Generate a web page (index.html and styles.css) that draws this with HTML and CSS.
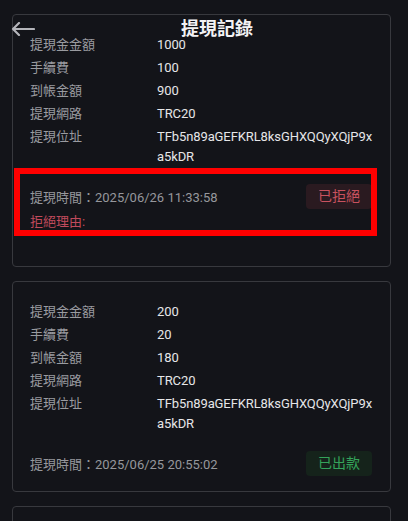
FILE: index.html
```html
<!DOCTYPE html>
<html lang="zh-Hant">
<head>
<meta charset="utf-8">
<link rel="stylesheet" href="styles.css">
</head>
<body>
<header class="topbar">
  <svg class="back" width="24" height="14" viewBox="0 0 24 14"><path d="M23 7H2M8 1L2 7l6 6" fill="none" stroke="#b4b5ba" stroke-width="2.2" stroke-linecap="round" stroke-linejoin="round"/></svg>
  <h1 class="title">提現記錄</h1>
</header>
<main class="list">
  <div class="card card-prev"></div>
  <section class="card">
    <div class="row"><span class="label">提現金金額</span><span class="value">1000</span></div>
    <div class="row"><span class="label">手續費</span><span class="value">100</span></div>
    <div class="row"><span class="label">到帳金額</span><span class="value">900</span></div>
    <div class="row"><span class="label">提現網路</span><span class="value">TRC20</span></div>
    <div class="row"><span class="label">提現位址</span><span class="value">TFb5n89aGEFKRL8ksGHXQQyXQjP9xa5kDR</span></div>
    <div class="foot">
      <span class="time">提現時間：2025/06/26 11:33:58</span>
      <span class="badge badge-reject">已拒絕</span>
    </div>
    <div class="reason">拒絕理由:</div>
    <div class="highlight"></div>
  </section>
  <section class="card">
    <div class="row"><span class="label">提現金金額</span><span class="value">200</span></div>
    <div class="row"><span class="label">手續費</span><span class="value">20</span></div>
    <div class="row"><span class="label">到帳金額</span><span class="value">180</span></div>
    <div class="row"><span class="label">提現網路</span><span class="value">TRC20</span></div>
    <div class="row"><span class="label">提現位址</span><span class="value">TFb5n89aGEFKRL8ksGHXQQyXQjP9xa5kDR</span></div>
    <div class="foot">
      <span class="time">提現時間：2025/06/25 20:55:02</span>
      <span class="badge badge-paid">已出款</span>
    </div>
  </section>
  <section class="card card-next"></section>
</main>
</body>
</html>
```
FILE: styles.css
```css
html, body {
  margin: 0;
  padding: 0;
  background: #131419;
  height: 100%;
  overflow: hidden;
}
body {
  font-family: Roboto, "Noto Sans CJK TC", sans-serif;
  color: #e4e4e6;
  position: relative;
}
.topbar {
  position: absolute;
  left: 0;
  top: 0;
  width: 408px;
  height: 58px;
  z-index: 5;
}
.back {
  position: absolute;
  left: 11px;
  top: 22px;
}
.title {
  margin: 0;
  position: absolute;
  left: 0;
  right: 0;
  top: 17px;
  text-align: center;
  font-size: 18px;
  line-height: 24px;
  font-weight: 700;
  color: #f2f2f4;
  padding-left: 26px;
}
.list {
  display: flex;
  flex-direction: column;
  gap: 14px;
  padding-left: 12px;
  margin-top: -41px;
}
.card {
  position: relative;
  border: 1px solid #38393e;
  border-radius: 4px;
  padding: 20px 17px 15px 17px;
  box-sizing: border-box;
  width: 379px;
  display: flex;
  flex-direction: column;
  gap: 3px;
}
.card-prev {
  height: 41px;
  padding: 0;
}
.card-next {
  height: 60px;
  padding: 0;
}
.row {
  display: flex;
  font-size: 13px;
  line-height: 20px;
}
.label {
  width: 127px;
  flex: none;
  color: #9a9ba0;
}
.value {
  width: 215px;
  color: #e6e6e8;
  word-break: break-all;
  letter-spacing: -0.1px;
}
.foot {
  display: flex;
  align-items: center;
  justify-content: space-between;
  margin-top: 14px;
  padding-right: 1px;
}
.time {
  font-size: 13px;
  color: #96979c;
}
.badge {
  width: 66px;
  height: 25px;
  border-radius: 4px;
  font-size: 14px;
  line-height: 25px;
  text-align: center;
}
.badge-reject {
  background: #2a1a20;
  color: #c8525f;
}
.badge-paid {
  background: #15231b;
  color: #34a35a;
}
.reason {
  font-size: 13px;
  line-height: 20px;
  color: #c04a5c;
  margin-top: 0;
  margin-bottom: 19px;
}
.highlight {
  position: absolute;
  left: 1px;
  top: 153px;
  width: 363px;
  height: 68px;
  border: 6px solid #ff0000;
  box-sizing: border-box;
}
```
